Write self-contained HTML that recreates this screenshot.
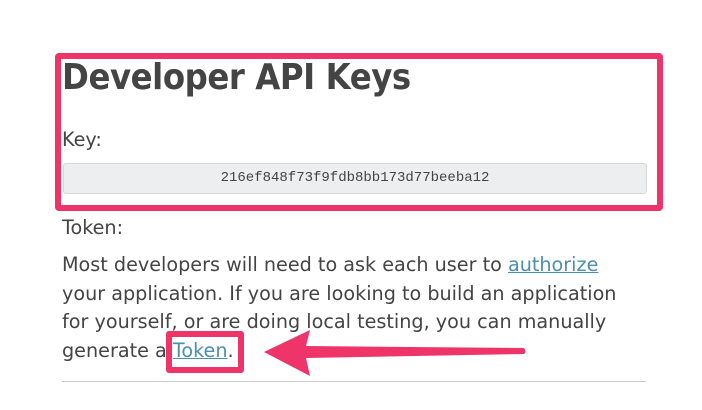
<!DOCTYPE html>
<html><head><style>
body{margin:0;width:702px;height:410px;background:#fff;position:relative;overflow:hidden;font-family:"DejaVu Sans","Liberation Sans",sans-serif;color:#444}
.a{position:absolute}
h1{position:absolute;left:62px;top:57px;margin:0;font-size:36px;font-weight:bold;color:#444;letter-spacing:-0.5px;transform:scaleX(0.9);transform-origin:0 0}
.t{font-size:19.2px;color:#444}
a{color:#4a8fb0;text-decoration:underline}
</style></head><body>
<h1>Developer API Keys</h1>
<div class="a t" style="left:62px;top:128px">Key:</div>
<div class="a" style="left:63px;top:163px;width:582px;height:29px;background:#eceeef;border:1px solid #d6d8da;border-radius:3px;font-family:'Liberation Mono',monospace;font-size:14px;text-align:center;line-height:29px;color:#444">216ef848f73f9fdb8bb173d77beeba12</div>
<div class="a" style="left:55px;top:53px;width:596px;height:146px;border:6px solid #ee3468;border-radius:4px"></div>
<div class="a t" style="left:62px;top:216px">Token:</div>
<div class="a t" style="left:62px;top:251px;width:600px;line-height:28.5px">Most developers will need to ask each user to <a>authorize</a><br>your application. If you are looking to build an application<br>for yourself, or are doing local testing, you can manually<br>generate a <a>Token</a>.</div>
<div class="a" style="left:166px;top:331px;width:66px;height:30px;border:6px solid #ee3468;border-radius:3px"></div>
<div class="a" style="left:62px;top:381px;width:584px;height:1px;background:#ccc"></div>
<svg class="a" style="left:0;top:0" width="702" height="410"><path d="M264 352 L310 330 L306 346 L524 348 Q527 352 524 354 L306 358 L310 376 Z" fill="#ee3468"/></svg>
</body></html>
